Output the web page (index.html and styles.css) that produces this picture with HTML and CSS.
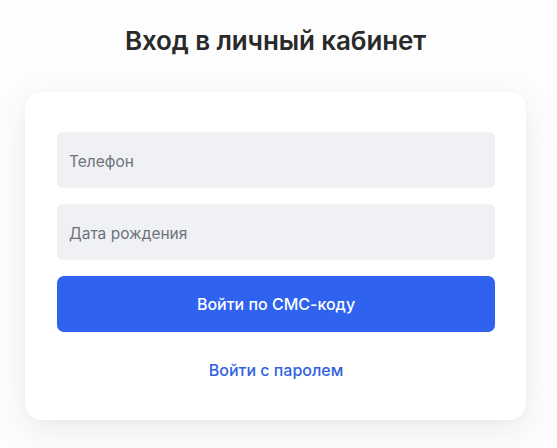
FILE: index.html
```html
<!DOCTYPE html>
<html lang="ru">
<head>
<meta charset="utf-8">
<title>Вход в личный кабинет</title>
<link rel="stylesheet" href="styles.css">
</head>
<body>
<main class="page">
  <h1 class="title">Вход в личный кабинет</h1>
  <form class="card">
    <div class="field"><span class="placeholder">Телефон</span></div>
    <div class="field"><span class="placeholder">Дата рождения</span></div>
    <button type="button" class="btn-primary">Войти по СМС-коду</button>
    <a class="link" href="#">Войти с паролем</a>
  </form>
</main>
</body>
</html>
```

FILE: styles.css
```css
* { box-sizing: border-box; }
html, body { margin: 0; padding: 0; }
body {
  background: #fdfdfd;
  font-family: Inter, "Noto Sans", "Liberation Sans", sans-serif;
  width: 557px;
  height: 448px;
  overflow: hidden;
}
.page {
  display: flex;
  flex-direction: column;
  align-items: center;
  padding: 25px 6px 0 0;
}
.title {
  margin: 0 0 35px;
  font-size: 26px;
  line-height: 32px;
  font-weight: 600;
  color: #2a2a2a;
  letter-spacing: -0.1px;
}
.card {
  width: 501px;
  background: #ffffff;
  border-radius: 16px;
  box-shadow: 0 10px 36px rgba(0, 0, 0, 0.075), 0 1px 4px rgba(0, 0, 0, 0.03);
  padding: 40px 31px 40px 32px;
  display: flex;
  flex-direction: column;
  gap: 16px;
  margin: 0;
}
.field {
  height: 56px;
  background: #f0f1f4;
  border-radius: 6px;
  display: flex;
  align-items: center;
  padding: 3px 12px 0;
}
.placeholder {
  font-size: 15.5px;
  color: #6f727c;
}
.btn-primary {
  height: 56px;
  border: none;
  border-radius: 7px;
  background: #2e62ef;
  color: #ffffff;
  font-family: inherit;
  font-size: 16px;
  font-weight: 500;
  cursor: pointer;
}
.link {
  align-self: center;
  margin-top: 12px;
  font-size: 16px;
  line-height: 20px;
  font-weight: 500;
  color: #2f62df;
  text-decoration: none;
}
```
